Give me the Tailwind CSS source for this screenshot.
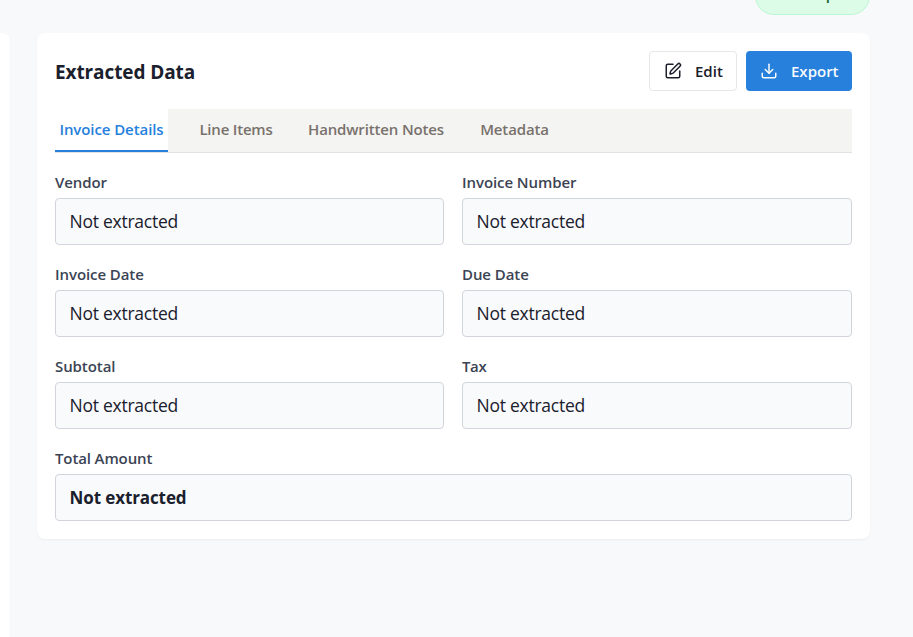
<!DOCTYPE html>
<html lang="en">
<head>
<meta charset="utf-8">
<title>Extracted Data</title>
<script src="https://cdn.jsdelivr.net/npm/@tailwindcss/browser@4"></script>
</head>
<body class="bg-[#f8f9fb]">
<div class="flex h-[637px] w-[913px] flex-col overflow-hidden font-['Open_Sans','Noto_Sans',sans-serif] text-[#1a202c]">
  <header class="flex h-[15px] shrink-0 items-end justify-end pr-[43px]">
    <div class="flex h-[38px] w-[115px] shrink-0 items-start justify-end rounded-full border border-[#bbf7d0] bg-[#dcfce7] pt-[6px] pr-[7px] text-[#166534]">
      <span class="text-[15px] leading-5 font-semibold tracking-[-0.12px]">Complete</span>
    </div>
  </header>
  <main class="mt-[18px] flex flex-1 items-start gap-[27px]">
    <aside class="h-[604px] w-[10px] shrink-0 rounded-tr-lg bg-white shadow-[0_1px_2px_rgba(0,0,0,0.05)]"></aside>
    <section class="h-[506px] w-[833px] rounded-lg bg-white p-[18px] shadow-[0_1px_2px_rgba(0,0,0,0.05)]">
      <div class="flex h-10 items-center justify-between">
        <h2 class="pt-[2px] text-[19px] font-bold tracking-[-0.1px]">Extracted Data</h2>
        <div class="flex gap-[9px]">
          <button class="flex h-10 w-[88px] items-center rounded border border-[#e5e7eb] pl-[14px] text-[15px] font-semibold">
            <svg class="mr-[13px] size-[18px]" viewBox="0 0 24 24" fill="none" stroke="currentColor" stroke-width="2" stroke-linecap="round" stroke-linejoin="round"><path d="M12 3H5a2 2 0 0 0-2 2v14a2 2 0 0 0 2 2h14a2 2 0 0 0 2-2v-7"/><path d="M18.375 2.625a1 1 0 0 1 3 3l-9.013 9.014a2 2 0 0 1-.853.505l-2.873.84a.5.5 0 0 1-.62-.62l.84-2.873a2 2 0 0 1 .506-.852z"/></svg>
            <span>Edit</span>
          </button>
          <button class="flex h-10 w-[106px] items-center rounded bg-[#2680dc] pl-[14px] text-[15px] font-semibold text-[#f8fafc]">
            <svg class="mr-[13px] size-[18px]" viewBox="0 0 24 24" fill="none" stroke="currentColor" stroke-width="2" stroke-linecap="round" stroke-linejoin="round"><path d="M21 15v4a2 2 0 0 1-2 2H5a2 2 0 0 1-2-2v-4"/><path d="m7 10 5 5 5-5"/><path d="M12 15V3"/></svg>
            <span>Export</span>
          </button>
        </div>
      </div>
      <nav class="mt-[18px] flex h-[44px] border-b border-[#e2e2e0] bg-[#f4f4f2] text-[15px] font-semibold text-[#78716c]">
        <div class="flex w-[113px] items-center justify-center border-b-2 border-[#2680dc] bg-white text-[#2680dc]"><span class="tracking-[-0.08px]">Invoice Details</span></div>
        <div class="flex w-[136px] items-center justify-center pb-[2px]"><span class="tracking-[-0.2px]">Line Items</span></div>
        <div class="flex w-[144px] items-center justify-center pb-[2px]"><span class="tracking-[-0.15px]">Handwritten Notes</span></div>
        <div class="flex w-[133px] items-center justify-center pb-[2px]"><span class="tracking-[-0.15px]">Metadata</span></div>
      </nav>
      <div class="mt-[18px] grid grid-cols-[389px_390px] gap-[18px] text-[17.5px] tracking-[-0.25px]">
        <div><div class="mb-1 h-[23px] text-[15px] leading-[23px] font-semibold tracking-[-0.12px] text-[#3b4454]">Vendor</div><div class="flex h-[47px] items-center rounded border border-[#d1d5db] bg-[#f9fafc] pl-[13.5px]">Not extracted</div></div>
        <div><div class="mb-1 h-[23px] text-[15px] leading-[23px] font-semibold tracking-[-0.08px] text-[#3b4454]">Invoice Number</div><div class="flex h-[47px] items-center rounded border border-[#d1d5db] bg-[#f9fafc] pl-[13.5px]">Not extracted</div></div>
        <div><div class="mb-1 h-[23px] text-[15px] leading-[23px] font-semibold tracking-[-0.08px] text-[#3b4454]">Invoice Date</div><div class="flex h-[47px] items-center rounded border border-[#d1d5db] bg-[#f9fafc] pl-[13.5px]">Not extracted</div></div>
        <div><div class="mb-1 h-[23px] text-[15px] leading-[23px] font-semibold tracking-[-0.08px] text-[#3b4454]">Due Date</div><div class="flex h-[47px] items-center rounded border border-[#d1d5db] bg-[#f9fafc] pl-[13.5px]">Not extracted</div></div>
        <div><div class="mb-1 h-[23px] text-[15px] leading-[23px] font-semibold tracking-[-0.08px] text-[#3b4454]">Subtotal</div><div class="flex h-[47px] items-center rounded border border-[#d1d5db] bg-[#f9fafc] pl-[13.5px]">Not extracted</div></div>
        <div><div class="mb-1 h-[23px] text-[15px] leading-[23px] font-semibold tracking-[-0.4px] text-[#3b4454]">Tax</div><div class="flex h-[47px] items-center rounded border border-[#d1d5db] bg-[#f9fafc] pl-[13.5px]">Not extracted</div></div>
        <div class="col-span-2"><div class="mb-1 h-[23px] text-[15px] leading-[23px] font-semibold tracking-[-0.12px] text-[#3b4454]">Total Amount</div><div class="flex h-[47px] items-center rounded border border-[#d1d5db] bg-[#f9fafc] pl-[13.5px] text-[17px] font-bold tracking-[-0.1px]">Not extracted</div></div>
      </div>
    </section>
  </main>
</div>
</body>
</html>
